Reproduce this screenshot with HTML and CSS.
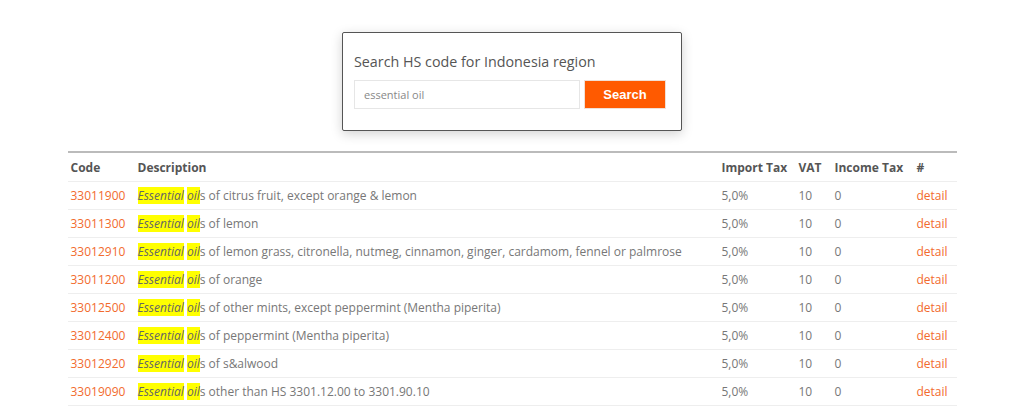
FILE: index.html
```html
<!DOCTYPE html>
<html>
<head>
<meta charset="utf-8">
<link rel="stylesheet" href="styles.css">
</head>
<body>
<div class="page">
  <div class="card">
    <div class="card-title">Search HS code for Indonesia region</div>
    <form class="search-row">
      <input class="search-input" type="text" value="essential oil">
      <button class="search-btn" type="button">Search</button>
    </form>
  </div>
  <table class="hs-table">
    <colgroup>
      <col class="c-code"><col class="c-desc"><col class="c-imp"><col class="c-vat"><col class="c-inc"><col class="c-act">
    </colgroup>
    <thead>
      <tr><th>Code</th><th>Description</th><th>Import Tax</th><th>VAT</th><th>Income Tax</th><th>#</th></tr>
    </thead>
    <tbody>
      <tr><td class="code">33011900</td><td><em class="hl">Essential</em> <em class="hl">oil</em>s of citrus fruit, except orange &amp; lemon</td><td>5,0%</td><td>10</td><td>0</td><td class="code">detail</td></tr>
      <tr><td class="code">33011300</td><td><em class="hl">Essential</em> <em class="hl">oil</em>s of lemon</td><td>5,0%</td><td>10</td><td>0</td><td class="code">detail</td></tr>
      <tr><td class="code">33012910</td><td><em class="hl">Essential</em> <em class="hl">oil</em>s of lemon grass, citronella, nutmeg, cinnamon, ginger, cardamom, fennel or palmrose</td><td>5,0%</td><td>10</td><td>0</td><td class="code">detail</td></tr>
      <tr><td class="code">33011200</td><td><em class="hl">Essential</em> <em class="hl">oil</em>s of orange</td><td>5,0%</td><td>10</td><td>0</td><td class="code">detail</td></tr>
      <tr><td class="code">33012500</td><td><em class="hl">Essential</em> <em class="hl">oil</em>s of other mints, except peppermint (Mentha piperita)</td><td>5,0%</td><td>10</td><td>0</td><td class="code">detail</td></tr>
      <tr><td class="code">33012400</td><td><em class="hl">Essential</em> <em class="hl">oil</em>s of peppermint (Mentha piperita)</td><td>5,0%</td><td>10</td><td>0</td><td class="code">detail</td></tr>
      <tr><td class="code">33012920</td><td><em class="hl">Essential</em> <em class="hl">oil</em>s of s&amp;alwood</td><td>5,0%</td><td>10</td><td>0</td><td class="code">detail</td></tr>
      <tr><td class="code">33019090</td><td><em class="hl">Essential</em> <em class="hl">oil</em>s other than HS 3301.12.00 to 3301.90.10</td><td>5,0%</td><td>10</td><td>0</td><td class="code">detail</td></tr>
    </tbody>
  </table>
</div>
</body>
</html>
```
FILE: styles.css
```css
html, body { margin: 0; padding: 0; background: #fff; }
body { font-family: "Open Sans", "Noto Sans", sans-serif; color: #666; }
.page { width: 889px; margin: 0 auto; padding-top: 32px; }
.card {
  width: 312px; margin: 0 auto; padding: 20px 15px 21px 11px;
  border: 1px solid #555; border-radius: 2px;
  box-shadow: 0 3px 12px rgba(0,0,0,0.18);
  background: #fff;
}
.card-title { font-size: 14.3px; color: #555; line-height: 18px; margin-bottom: 9px; }
.search-row { display: flex; gap: 4px; margin: 0; }
.search-input {
  box-sizing: border-box; width: 226px; height: 29px; border: 1px solid #e6e6e6;
  padding: 0 9px; font-family: inherit; font-size: 11px; color: #888; outline: none;
}
.search-btn {
  box-sizing: border-box; width: 82px; height: 29px; border: 1px solid #f0e0d6;
  background: #ff5a00; color: #fff; font-family: "Liberation Sans", Arial, sans-serif;
  font-weight: bold; font-size: 13px; padding: 0;
}
.hs-table {
  width: 889px; margin-top: 20px; border-collapse: collapse; table-layout: fixed;
  border-top: 2px solid #bbb;
}
.c-code { width: 67px; } .c-desc { width: 584px; } .c-imp { width: 77px; }
.c-vat { width: 36px; } .c-inc { width: 82px; } .c-act { width: 43px; }
.hs-table th {
  text-align: left; font-size: 12px; font-weight: bold; color: #555;
  height: 28px; padding: 0 0 0 3px; border-bottom: 1px solid #eee; white-space: nowrap;
}
.hs-table td {
  font-size: 12px; color: #777; height: 27px; padding: 0 0 0 3px;
  border-bottom: 1px solid #eee; white-space: nowrap;
}
.hs-table td.code { color: #f26b2e; }
.hl { background: #ffff00; font-style: italic; color: #666; }
```
